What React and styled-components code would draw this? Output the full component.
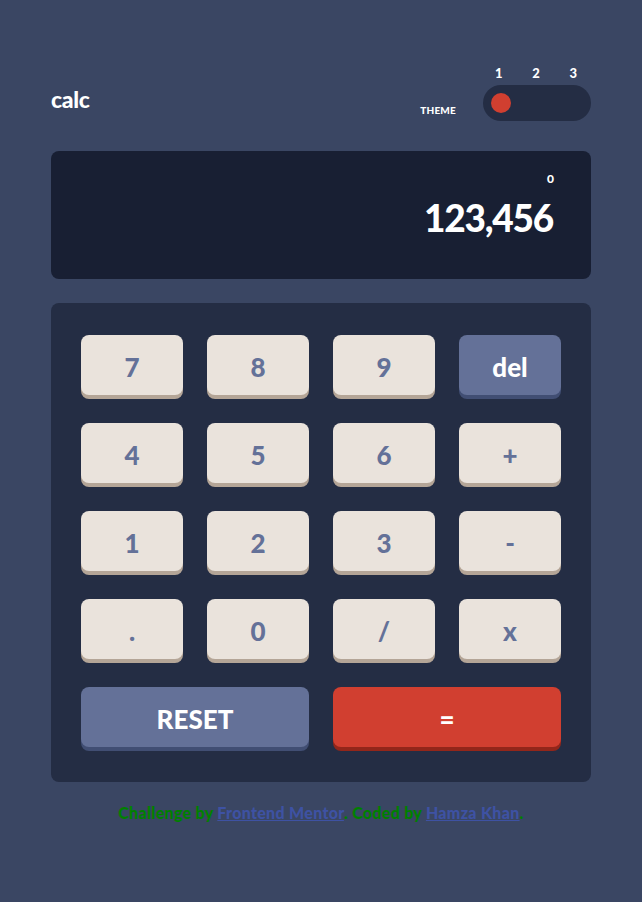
import React, { useState } from 'react';
import styled, { createGlobalStyle } from 'styled-components';

const GlobalStyle = createGlobalStyle`
  body {
    margin: 0;
    background: #3a4663;
    font-family: "Lato", "DejaVu Sans", sans-serif;
  }
`;

const keys = [
  { label: '7' }, { label: '8' }, { label: '9' }, { label: 'del', kind: 'del' },
  { label: '4' }, { label: '5' }, { label: '6' }, { label: '+' },
  { label: '1' }, { label: '2' }, { label: '3' }, { label: '-' },
  { label: '.' }, { label: '0' }, { label: '/' }, { label: 'x' },
  { label: 'RESET', kind: 'reset', wide: true }, { label: '=', kind: 'equal', wide: true },
];

const palette = {
  num: { bg: '#eae3dc', shadow: '#b4a597', color: '#647198' },
  del: { bg: '#647198', shadow: '#414e73', color: '#ffffff' },
  reset: { bg: '#647198', shadow: '#414e73', color: '#ffffff' },
  equal: { bg: '#d13f30', shadow: '#93261a', color: '#ffffff' },
};

const App = () => {
  const [theme, setTheme] = useState(1);

  return (
    <>
      <GlobalStyle />
      <Main>
        <Header>
          <Logo>calc</Logo>
          <ThemeGroup>
            <ThemeLabel>THEME</ThemeLabel>
            <ToggleBox>
              <Numbers>
                <span>1</span>
                <span>2</span>
                <span>3</span>
              </Numbers>
              <Track onClick={() => setTheme(theme === 3 ? 1 : theme + 1)}>
                <Knob $pos={theme} />
              </Track>
            </ToggleBox>
          </ThemeGroup>
        </Header>

        <Screen>
          <Prev>0</Prev>
          <Value>123,456</Value>
        </Screen>

        <Keypad>
          {keys.map((k) => (
            <Key key={k.label} $kind={k.kind || 'num'} $wide={k.wide}>
              {k.label}
            </Key>
          ))}
        </Keypad>

        <Attribution>
          Challenge by <a href="#">Frontend Mentor</a>. Coded by <a href="#">Hamza Khan</a>.
        </Attribution>
      </Main>
    </>
  );
};

export default App;

const Main = styled.main`
  width: 540px;
  margin: 0 auto;
  padding-top: 66px;
`;

const Header = styled.header`
  display: flex;
  justify-content: space-between;
  align-items: flex-end;
`;

const Logo = styled.h1`
  margin: 0 0 8px;
  font-size: 23px;
  font-weight: 900;
  color: #ffffff;
  letter-spacing: -0.3px;
`;

const ThemeGroup = styled.div`
  display: flex;
  align-items: flex-end;
  gap: 27px;
`;

const ThemeLabel = styled.span`
  font-size: 10px;
  font-weight: 900;
  color: #ffffff;
  letter-spacing: 0.2px;
  margin-bottom: 5px;
`;

const ToggleBox = styled.div`
  display: flex;
  flex-direction: column;
  gap: 4px;
`;

const Numbers = styled.div`
  display: flex;
  justify-content: space-between;
  padding: 0 14px 0 12px;
  font-size: 13px;
  font-weight: 900;
  color: #ffffff;
  line-height: 15px;
`;

const Track = styled.div`
  position: relative;
  width: 108px;
  height: 36px;
  border-radius: 18px;
  background: #242d44;
  cursor: pointer;
`;

const Knob = styled.span`
  position: absolute;
  top: 8px;
  left: ${({ $pos }) => 8 + ($pos - 1) * 36}px;
  width: 20px;
  height: 20px;
  border-radius: 50%;
  background: #d13f30;
`;

const Screen = styled.section`
  margin-top: 30px;
  height: 128px;
  box-sizing: border-box;
  border-radius: 8px;
  background: #181f33;
  display: flex;
  flex-direction: column;
  align-items: flex-end;
  padding: 21px 38px 0 0;
  color: #ffffff;
`;

const Prev = styled.span`
  font-size: 12px;
  font-weight: 900;
  line-height: 14px;
  margin-right: -1px;
`;

const Value = styled.span`
  margin-top: 12px;
  font-size: 37px;
  font-weight: 900;
  line-height: 40px;
  letter-spacing: -1.2px;
`;

const Keypad = styled.section`
  margin-top: 24px;
  border-radius: 8px;
  background: #242d44;
  padding: 32px 30px 35px;
  display: grid;
  grid-template-columns: repeat(4, 102px);
  column-gap: 24px;
  row-gap: 28px;
`;

const Key = styled.button`
  grid-column: ${({ $wide }) => ($wide ? 'span 2' : 'auto')};
  height: 60px;
  border: none;
  border-radius: 8px;
  background: ${({ $kind }) => palette[$kind].bg};
  box-shadow: 0 4px 0 ${({ $kind }) => palette[$kind].shadow};
  color: ${({ $kind }) => palette[$kind].color};
  font-family: inherit;
  font-size: 26px;
  font-weight: 900;
  padding-top: 4px;
  cursor: pointer;
`;

const Attribution = styled.p`
  margin: 21px 0 0;
  text-align: center;
  font-size: 16px;
  font-weight: 900;
  letter-spacing: 0.3px;
  color: green;

  a {
    color: hsl(228, 45%, 44%);
  }
`;
